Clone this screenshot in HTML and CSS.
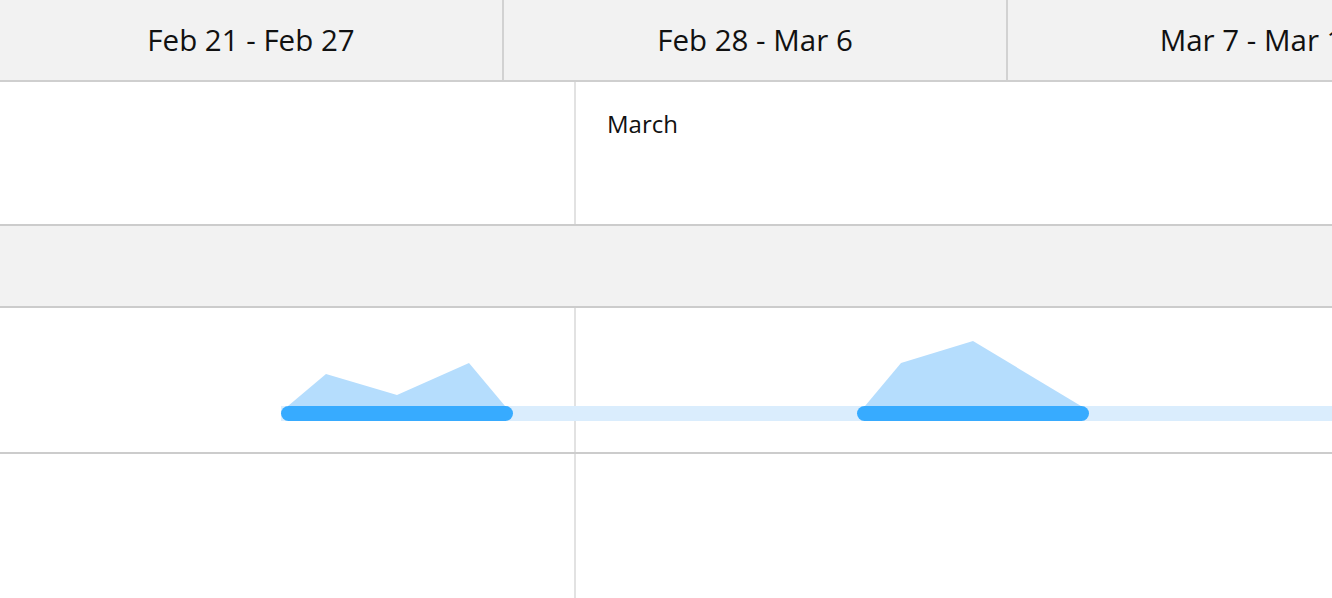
FILE: index.html
```html
<!DOCTYPE html>
<html>
<head>
<meta charset="utf-8">
<link rel="stylesheet" href="styles.css">
</head>
<body>
<div class="gantt">
  <div class="header">
    <div class="week">Feb 21 - Feb 27</div>
    <div class="week">Feb 28 - Mar 6</div>
    <div class="week">Mar 7 - Mar 13</div>
  </div>
  <div class="row row-month">
    <div class="cell cell-feb"></div>
    <div class="cell cell-mar"><span class="month-label">March</span></div>
  </div>
  <div class="row row-group"></div>
  <div class="row row-task">
    <div class="cell cell-feb"></div>
    <div class="cell cell-mar"></div>
    <svg class="chart" width="1332" height="145" viewBox="0 308 1332 145">
      <rect x="281" y="406" width="1060" height="15" fill="#daedfd"/>
      <polygon points="288,406 326,374 397,395 469,363 505,406" fill="#b5ddfd"/>
      <polygon points="865,406 901,363 973,341 1081,406" fill="#b5ddfd"/>
      <rect x="281" y="406" width="232" height="15" rx="7.5" fill="#37abff"/>
      <rect x="857" y="406" width="232" height="15" rx="7.5" fill="#37abff"/>
    </svg>
  </div>
  <div class="row row-empty">
    <div class="cell cell-feb"></div>
    <div class="cell cell-mar"></div>
  </div>
</div>
</body>
</html>
```
FILE: styles.css
```css
html, body {
  margin: 0;
  padding: 0;
  background: #fff;
  overflow: hidden;
}
body {
  font-family: "Open Sans", Lato, sans-serif;
  color: #111;
}
.gantt {
  width: 1332px;
  height: 598px;
  overflow: hidden;
}
.header {
  display: flex;
  height: 80px;
  background: #f2f2f2;
  border-bottom: 2px solid #cfcfcf;
  white-space: nowrap;
}
.week {
  flex: 0 0 502px;
  display: flex;
  align-items: center;
  justify-content: center;
  font-size: 29.5px;
  border-right: 2px solid #d2d2d2;
  padding-bottom: 1px;
}
.week:last-child {
  border-right: none;
  flex: 0 0 504px;
}
.row {
  display: flex;
  position: relative;
  border-bottom: 2px solid #cccccc;
}
.row-month { height: 142px; }
.row-group { height: 80px; background: #f2f2f2; }
.row-task { height: 144px; }
.row-empty { height: 150px; border-bottom: none; }
.cell-feb { flex: 0 0 574px; }
.cell-mar {
  flex: 1;
  border-left: 2px solid #e2e2e2;
}
.month-label {
  display: block;
  margin: 25px 0 0 31px;
  font-size: 24px;
  line-height: 34px;
}
.chart {
  position: absolute;
  left: 0;
  top: 0;
}
```
